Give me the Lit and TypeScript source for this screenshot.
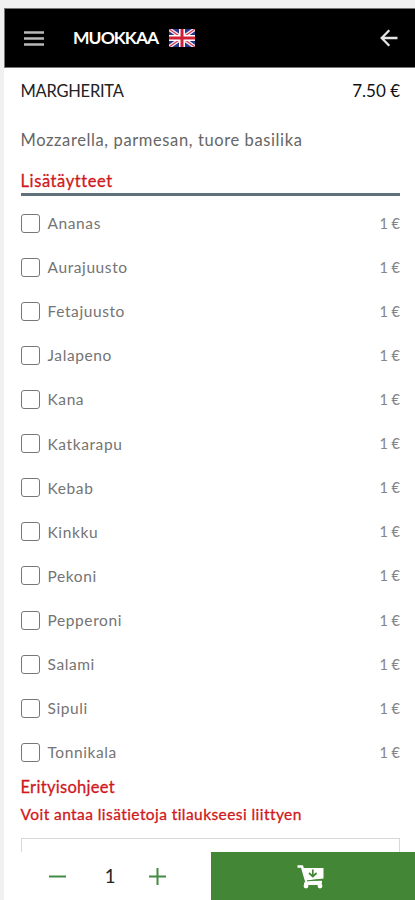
import { LitElement, html, css } from "lit";
import { customElement, property, state } from "lit/decorators.js";

const TOPPINGS = [
  "Ananas", "Aurajuusto", "Fetajuusto", "Jalapeno", "Kana", "Katkarapu", "Kebab",
  "Kinkku", "Pekoni", "Pepperoni", "Salami", "Sipuli", "Tonnikala",
];

@customElement("topping-row")
class ToppingRow extends LitElement {
  @property() name = "";
  @property() price = "1 €";
  @state() checked = false;

  static styles = css`
    :host { display: flex; align-items: center; height: 44.12px; color: #747474; cursor: pointer; }
    .box { box-sizing: border-box; width: 19px; height: 19px; border: 1.5px solid #777; border-radius: 3px; flex: none; }
    .box.on { background: #438736; border-color: #438736; }
    .name { flex: 1; margin-left: 8px; font-size: 15.5px; letter-spacing: 0.6px; line-height: 20px; }
    .price { font-size: 14.5px; color: #858585; letter-spacing: 0; }
  `;

  render() {
    return html`
      <span class="box ${this.checked ? "on" : ""}" @click=${() => (this.checked = !this.checked)}></span>
      <span class="name">${this.name}</span>
      <span class="price">${this.price}</span>`;
  }
}

@customElement("app-root")
class AppRoot extends LitElement {
  @state() quantity = 1;

  static styles = css`
    :host { display: block; height: 900px; overflow: hidden; background: #f1f1f1; font-family: Lato, "Open Sans", sans-serif; font-variant-ligatures: none; }
    .page { box-sizing: border-box; height: 900px; padding: 8px 0 0 4px; display: flex; flex-direction: column; }
    header { box-sizing: border-box; flex: none; height: 60px; background: #000; border: 1px solid #777; border-width: 1px 0 1px 1px; display: flex; align-items: center; padding: 0 17px 0 19px; }
    .menu { width: 20px; height: 15px; flex: none; }
    .title { margin-left: 29px; color: #fff; font-size: 17.5px; font-weight: 700; letter-spacing: -0.95px; line-height: 24px; width: 86px; white-space: nowrap; }
    .flag { width: 26px; height: 18px; margin-left: 10px; flex: none; }
    .back { margin-left: auto; width: 18px; height: 18px; flex: none; }
    main { flex: 1; min-height: 0; overflow: hidden; background: #fff; padding: 11px 15px 0 16.5px; }
    .dish { display: flex; justify-content: space-between; font-size: 16.5px; line-height: 24px; color: #222; letter-spacing: -0.25px; }
    .dish .cost { color: #111; font-size: 17px; letter-spacing: 0; }
    .desc { margin-top: 25px; font-size: 16.5px; line-height: 24px; color: #666; white-space: nowrap; letter-spacing: 0.61px; }
    .section { color: #cf1820; font-size: 16.5px; font-weight: 400; -webkit-text-stroke: 0.3px #cf1820; line-height: 24px; margin: 1px 0 0; letter-spacing: 0.3px; }
    .extras { margin-top: 17px; height: 24px; border-bottom: 3px solid #5f727c; margin-bottom: 5px; letter-spacing: 0.6px; }
    .hint { color: #cf1820; font-size: 15.5px; -webkit-text-stroke: 0.3px #cf1820; line-height: 24px; margin-top: 3px; white-space: nowrap; letter-spacing: 0.43px; }
    .notes { box-sizing: border-box; height: 60px; margin-top: 12px; border: 1px solid #d8d8d8; }
    footer { flex: none; height: 48px; display: flex; background: #fff; }
    .stepper { width: 207px; display: flex; align-items: center; box-sizing: border-box; padding-left: 45px; }
    .stepper svg { width: 17px; height: 17px; flex: none; }
    .count { width: 83px; box-sizing: border-box; padding-left: 5px; text-align: center; font-size: 18.5px; color: #222; line-height: 24px; margin-top: -1px; }
    .cart { flex: 1; background: #438736; display: flex; align-items: center; justify-content: center; padding-right: 5px; }
    .cart svg { width: 27px; height: 24px; margin-top: 2px; }
  `;

  render() {
    return html`
      <div class="page">
        <header>
          <svg class="menu" viewBox="0 0 20 15" stroke="#b8b8b8" stroke-width="2.6"><path d="M0 1.5H20M0 7.5H20M0 13.5H20" /></svg>
          <span class="title">MUOKKAA</span>
          <svg class="flag" viewBox="0 0 26 18">
            <rect width="26" height="18" fill="#26358c" />
            <path d="M0 0L26 18M26 0L0 18" stroke="#f5eef5" stroke-width="3.8" />
            <path d="M0 0L26 18M26 0L0 18" stroke="#d43b4e" stroke-width="1.2" />
            <path d="M13 0V18M0 9H26" stroke="#fff" stroke-width="6" />
            <path d="M13 0V18M0 9H26" stroke="#cf2038" stroke-width="3" />
          </svg>
          <svg class="back" viewBox="0 0 18 18" fill="none" stroke="#e4e4e4" stroke-width="2.3"><path d="M17.5 9H2M9.3 1.2L1.7 9L9.3 16.8" /></svg>
        </header>
        <main>
          <div class="dish"><span>MARGHERITA</span><span class="cost">7.50 €</span></div>
          <div class="desc">Mozzarella, parmesan, tuore basilika</div>
          <h2 class="section extras">Lisätäytteet</h2>
          ${TOPPINGS.map((t) => html`<topping-row .name=${t}></topping-row>`)}
          <h2 class="section">Erityisohjeet</h2>
          <div class="hint">Voit antaa lisätietoja tilaukseesi liittyen</div>
          <div class="notes"></div>
        </main>
        <footer>
          <div class="stepper">
            <svg viewBox="0 0 17 17" stroke="#438a43" stroke-width="2" @click=${() => (this.quantity = Math.max(1, this.quantity - 1))}><path d="M0 8.5H17" /></svg>
            <span class="count">${this.quantity}</span>
            <svg viewBox="0 0 17 17" stroke="#438a43" stroke-width="2" @click=${() => this.quantity++}><path d="M0 8.5H17M8.5 0V17" /></svg>
          </div>
          <div class="cart">
            <svg viewBox="0 0 27 24">
              <path d="M0.5 1.5H5L9.5 17H25" fill="none" stroke="#fff" stroke-width="2.6" />
              <path d="M6 3H26.5V13.5L9 15.5Z" fill="#fff" />
              <path d="M7 17.5H24.5V20H7Z" fill="#fff" />
              <circle cx="9" cy="21" r="2.4" fill="#fff" /><circle cx="23" cy="21" r="2.4" fill="#fff" />
              <path d="M15.8 4.5V11M12 8L15.8 11.5L19.6 8" fill="none" stroke="#438736" stroke-width="1.7" />
              <path d="M10 15.9L25 14.6" stroke="#438736" stroke-width="1" />
            </svg>
          </div>
        </footer>
      </div>`;
  }
}
